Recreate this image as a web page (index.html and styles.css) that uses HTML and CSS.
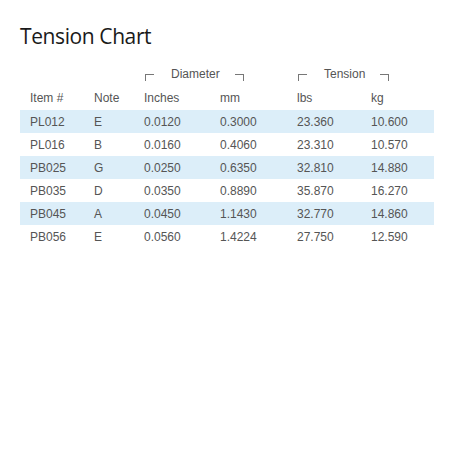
FILE: index.html
```html
<!DOCTYPE html>
<html>
<head>
<meta charset="utf-8">
<link rel="stylesheet" href="styles.css">
</head>
<body>
<h1 class="title">Tension Chart</h1>
<table class="chart">
  <colgroup>
    <col class="c1"><col class="c2"><col class="c3"><col class="c4"><col class="c5"><col class="c6">
  </colgroup>
  <thead>
    <tr class="group">
      <th></th><th></th>
      <th colspan="2"><div class="grp"><span class="br br-l"></span><span>Diameter</span><span class="br br-r"></span></div></th>
      <th colspan="2"><div class="grp"><span class="br br-l"></span><span>Tension</span><span class="br br-r"></span></div></th>
    </tr>
    <tr class="cols">
      <th>Item #</th><th>Note</th><th>Inches</th><th>mm</th><th>lbs</th><th>kg</th>
    </tr>
  </thead>
  <tbody>
    <tr class="odd"><td>PL012</td><td>E</td><td>0.0120</td><td>0.3000</td><td>23.360</td><td>10.600</td></tr>
    <tr><td>PL016</td><td>B</td><td>0.0160</td><td>0.4060</td><td>23.310</td><td>10.570</td></tr>
    <tr class="odd"><td>PB025</td><td>G</td><td>0.0250</td><td>0.6350</td><td>32.810</td><td>14.880</td></tr>
    <tr><td>PB035</td><td>D</td><td>0.0350</td><td>0.8890</td><td>35.870</td><td>16.270</td></tr>
    <tr class="odd"><td>PB045</td><td>A</td><td>0.0450</td><td>1.1430</td><td>32.770</td><td>14.860</td></tr>
    <tr><td>PB056</td><td>E</td><td>0.0560</td><td>1.4224</td><td>27.750</td><td>12.590</td></tr>
  </tbody>
</table>
</body>
</html>
```
FILE: styles.css
```css
body {
  margin: 0;
  padding: 0 20px;
  background: #fff;
  font-family: "Liberation Sans", Arial, sans-serif;
}
.title {
  margin: 0;
  padding-top: 22px;
  font-family: "Open Sans", "Noto Sans", sans-serif;
  font-weight: 400;
  font-size: 21px;
  line-height: 28px;
  color: #1a1a1a;
  letter-spacing: -0.4px;
}
.chart {
  margin-top: 12px;
  border-collapse: collapse;
  table-layout: fixed;
  width: 414px;
  font-size: 12px;
  color: #555;
}
.c1 { width: 64px; }
.c2 { width: 50px; }
.c3 { width: 76px; }
.c4 { width: 77px; }
.c5 { width: 74px; }
.c6 { width: 73px; }
.chart th, .chart td {
  padding: 0 0 0 10px;
  text-align: left;
  font-weight: 400;
  white-space: nowrap;
}
.group th {
  height: 24px;
  vertical-align: middle;
}
.grp {
  display: flex;
  align-items: center;
  gap: 17px;
  padding-left: 1px;
}
.br {
  display: block;
  width: 8px;
  height: 6px;
  margin-top: 6px;
  border-top: 1px solid #777;
}
.br-l { border-left: 1px solid #777; }
.br-r { border-right: 1px solid #777; margin-left: -2px; }
.cols th {
  height: 24px;
  vertical-align: middle;
}
.chart td {
  height: 23px;
  vertical-align: middle;
}
.odd td {
  background: #dceef9;
}
```
